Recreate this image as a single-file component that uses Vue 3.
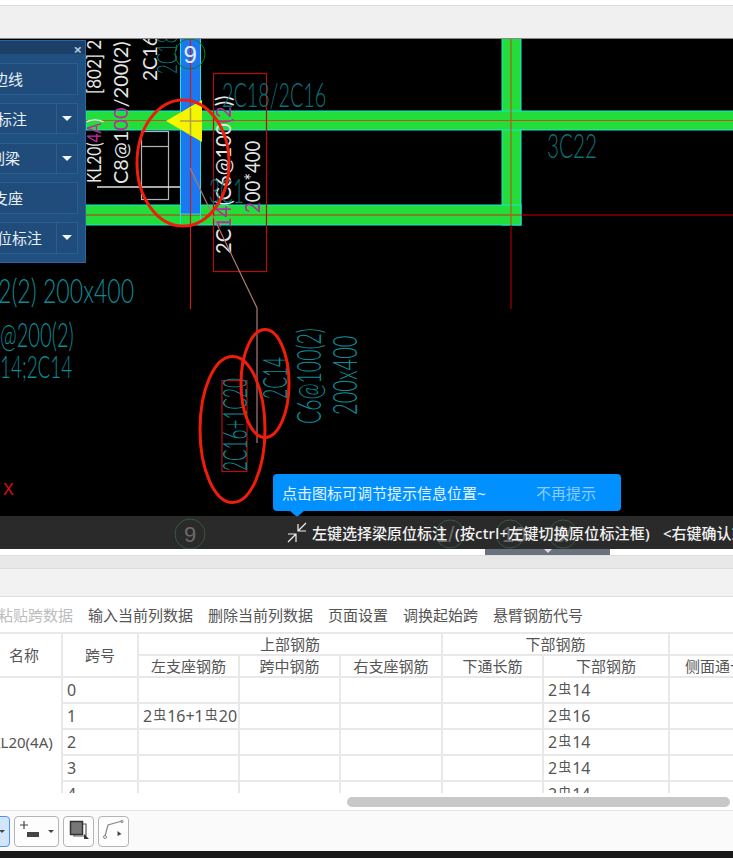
<template>
  <div class="page">
    <div class="top-strip"></div>

    <section class="canvas">
      <svg class="cad" width="733" height="510" viewBox="0 39 733 510" xmlns="http://www.w3.org/2000/svg">
        <!-- beams -->
        <rect x="502" y="30" width="19" height="195" fill="#22dd3a" stroke="#19e6d8" stroke-width="1" />
        <rect x="80" y="205" width="441" height="20" fill="#22dd3a" stroke="#19e6d8" stroke-width="1" />
        <rect x="86" y="111" width="660" height="19" fill="#22dd3a" stroke="#19e6d8" stroke-width="1" />
        <line x1="86" y1="120.500" x2="733" y2="120.500" stroke="#b85a1c" stroke-width="1.200" />
        <line x1="86" y1="215" x2="521" y2="215" stroke="#c8301a" stroke-width="1.200" />
        <line x1="521" y1="215" x2="733" y2="215" stroke="#c80000" stroke-width="1" />
        <line x1="511" y1="39" x2="511" y2="225" stroke="#b85a1c" stroke-width="1.200" />
        <line x1="511" y1="225" x2="511" y2="309" stroke="#a00000" stroke-width="1.200" />

        <!-- column -->
        <rect x="180.500" y="30" width="20" height="184" fill="#1c78f2" stroke="#19e6d8" stroke-width="1" />
        <line x1="180.500" y1="214" x2="180.500" y2="225" stroke="#19e6d8" />
        <line x1="200.500" y1="214" x2="200.500" y2="225" stroke="#19e6d8" />
        <line x1="190.500" y1="39" x2="190.500" y2="309" stroke="#c02020" stroke-width="1.200" />
        <polygon points="166,121 202,100 202,142" fill="#f5f500" />
        <line x1="180" y1="121" x2="202" y2="121" stroke="#b0a040" stroke-width="1.500" />
        <line x1="190.500" y1="108" x2="190.500" y2="136" stroke="#b0a040" stroke-width="1.500" />

        <!-- wall detail -->
        <g fill="none" stroke="#b4b4b4" stroke-width="1.200">
          <rect x="141.500" y="131.500" width="27" height="68" />
          <line x1="141" y1="146.500" x2="168" y2="146.500" />
        </g>
        <line x1="97" y1="187" x2="180" y2="187" stroke="#e0e0e0" stroke-width="1.500" />

        <!-- red boxes -->
        <rect x="213.500" y="73.500" width="53" height="198" fill="none" stroke="#b80d0d" stroke-width="1.200" />
        <rect x="222" y="380.500" width="25" height="91" fill="none" stroke="#b80d0d" stroke-width="1.200" />

        <!-- axis 9 -->
        <circle cx="190" cy="54" r="15" fill="none" stroke="#0b7a24" stroke-width="1" />
        <text x="183.500" y="63" class="axis-num">9</text>

        <!-- annotations -->
        <text
          v-for="(t, i) in notes"
          :key="i"
          class="note"
          :class="{ 'note-white': t.size < 22 }"
          :font-size="t.size"
          :transform="noteTransform(t)"
        ><tspan v-for="(p, j) in t.parts" :key="j" :fill="p[1]">{{ p[0] }}</tspan></text>

        <text x="3" y="495" class="mark-x">X</text>

        <!-- leader -->
        <polyline points="190,168 257,308 257,443" fill="none" stroke="#b07878" stroke-width="1.200" />

        <!-- hand drawn rings -->
        <g fill="none" stroke="#f01c0c" stroke-width="3">
          <ellipse cx="183" cy="163" rx="46" ry="63" />
          <ellipse cx="232.500" cy="429.500" rx="32.500" ry="73" />
          <ellipse cx="265" cy="383.500" rx="24" ry="54" />
        </g>

        <!-- axis bubbles under the status bar -->
        <g fill="none" stroke="#20a038" stroke-width="1">
          <circle cx="190" cy="534" r="15" />
          <circle cx="450" cy="534" r="14" />
          <circle cx="510" cy="534" r="14" />
          <circle cx="563" cy="534" r="14" />
        </g>
        <g class="bubble-num">
          <text x="184" y="542">9</text>
          <text x="436" y="542">1/</text>
          <text x="502" y="542">10</text>
          <text x="553" y="542">3/</text>
        </g>
      </svg>

      <div class="panel">
        <div class="panel-head"><span class="panel-close">×</span></div>
        <div class="panel-body">
          <div v-for="b in panelButtons" :key="b.id" class="panel-row">
            <div class="panel-btn" :style="{ paddingRight: b.pad + 'px' }">{{ b.text }}</div>
            <div v-if="b.drop" class="panel-drop"><i></i></div>
          </div>
        </div>
      </div>

      <div class="tip">
        <span class="tip-text">点击图标可调节提示信息位置~</span>
        <span class="tip-link">不再提示</span>
      </div>

      <div class="status">
        <svg class="status-icon" width="20" height="21" viewBox="0 0 20 21" fill="none" stroke="#f0f0f0" stroke-width="1.200">
          <path d="M19 1 11 9M11 2V9H19" />
          <path d="M1 20 9 12M1 12H9V20" />
        </svg>
        <span class="st-a">左键选择梁原位标注</span>
        <span class="st-b">(按ctrl+左键切换原位标注框)</span>
        <span class="st-c">&lt;右键确认或ESC取消&gt;</span>
      </div>
    </section>

    <div class="splitter"><div class="splitter-tab"><i></i></div></div>
    <div class="dock-head"></div>
    <div class="dock-title"></div>

    <div class="tools">
      <span class="tool-off">粘贴跨数据</span>
      <span v-for="t in tools" :key="t">{{ t }}</span>
    </div>

    <div class="grid-wrap">
      <table class="grid">
        <colgroup>
          <col class="c-name" />
          <col class="c-span" />
          <col class="c-101" />
          <col class="c-101" />
          <col class="c-102" />
          <col class="c-101" />
          <col class="c-126" />
          <col class="c-107" />
          <col class="c-107" />
        </colgroup>
        <thead>
          <tr class="h1">
            <th rowspan="2">名称</th>
            <th rowspan="2">跨号</th>
            <th colspan="3">上部钢筋</th>
            <th colspan="2">下部钢筋</th>
            <th colspan="2">侧面钢筋</th>
          </tr>
          <tr class="h2">
            <th>左支座钢筋</th>
            <th>跨中钢筋</th>
            <th>右支座钢筋</th>
            <th>下通长筋</th>
            <th>下部钢筋</th>
            <th>侧面通长筋</th>
            <th>侧面原位</th>
          </tr>
        </thead>
        <tbody>
          <tr v-for="(r, i) in rows" :key="i">
            <td v-if="i === 0" rowspan="5" class="name">KL20(4A)</td>
            <td class="left">{{ i }}</td>
            <td class="left">
              <template v-if="r.top">2<span class="bar">虫</span>16+1<span class="bar">虫</span>20</template>
            </td>
            <td></td>
            <td></td>
            <td></td>
            <td class="left">2<span class="bar">虫</span>{{ r.low }}</td>
            <td></td>
            <td></td>
          </tr>
        </tbody>
      </table>
    </div>

    <div class="scroll"><div class="thumb"></div></div>

    <div class="foot">
      <div class="foot-btn first"><i class="caret"></i></div>
      <div class="foot-btn wide">
        <svg width="26" height="22" viewBox="0 0 26 22" fill="none">
          <path d="M2 5H10M6 1V9" stroke="#444" stroke-width="1.200" />
          <rect x="9" y="12" width="12" height="5" fill="#444" />
        </svg>
        <i class="caret"></i>
      </div>
      <div class="foot-btn">
        <svg width="22" height="22" viewBox="0 0 22 22" fill="none">
          <rect x="2.500" y="1.500" width="12" height="13" fill="#777" stroke="#333" stroke-width="1.500" />
          <path d="M15 4H18V16H6V15" stroke="#555" stroke-width="1.200" />
          <path d="M16 14 21 19H16Z" fill="#333" />
        </svg>
      </div>
      <div class="foot-btn">
        <svg width="24" height="22" viewBox="0 0 24 22" fill="none">
          <path d="M3 16 6 5 20 1" stroke="#888" stroke-width="1.200" />
          <circle cx="3" cy="17" r="1.500" stroke="#888" />
          <circle cx="20" cy="1.500" r="1.200" stroke="#888" />
          <path d="M15.500 11 19.500 14 15.500 16Z" fill="#444" />
        </svg>
      </div>
    </div>
    <div class="foot-edge"></div>
  </div>
</template>

<script setup>
const red = '#b0309c'
const white = '#e6e6e6'
const teal = '#0f8a94'
const tealDark = '#0c727a'

const part = (text, color) => [text, color]

// size and sx set the height and the advance of the narrow cad lettering
const notes = [
  { x: 101, y: 183, rot: true, size: 20, sx: 0.78, parts: [part('KL20(', white), part('4A', red), part(')', white)] },
  { x: 101, y: 94, rot: true, size: 20, sx: 0.85, parts: [part('[802] 2', white)] },
  { x: 128, y: 184, rot: true, size: 20, sx: 1, parts: [part('C8@1', white), part('00', red), part('/200(2)', white)] },
  { x: 157, y: 81, rot: true, size: 20, sx: 0.95, parts: [part('2C16', white)] },
  { x: 177, y: 74, rot: true, size: 28, sx: 0.6, parts: [part('2C18', tealDark)] },
  { x: 231, y: 254, rot: true, size: 21, sx: 0.96, parts: [part('2C', white), part('14', red), part('(C6@100', white), part('(2', red), part('))', white)] },
  { x: 260, y: 213, rot: true, size: 21, sx: 0.88, parts: [part('2', red), part('00*400', white)] },
  { x: 222, y: 107, size: 33, sx: 0.6, parts: [part('2C18/2C16', tealDark)] },
  { x: 547, y: 158, size: 34, sx: 0.61, parts: [part('3C22', tealDark)] },
  { x: 209, y: 203, size: 34, sx: 0.56, parts: [part('3C1', tealDark)] },
  { x: -2, y: 303, size: 33, sx: 0.7, parts: [part('2(2) 200x400', teal)] },
  { x: 0, y: 347, size: 33, sx: 0.61, parts: [part('@200(2)', teal)] },
  { x: 0, y: 378, size: 32, sx: 0.59, parts: [part('14;2C14', teal)] },
  { x: 287, y: 399, rot: true, size: 33, sx: 0.53, parts: [part('2C14', teal)] },
  { x: 247, y: 471, rot: true, size: 33, sx: 0.52, parts: [part('2C16+1C20', teal)] },
  { x: 321, y: 424, rot: true, size: 33, sx: 0.59, parts: [part('C6@100(2)', teal)] },
  { x: 357, y: 415, rot: true, size: 33, sx: 0.61, parts: [part('200x400', teal)] },
]

function noteTransform(t) {
  const turn = t.rot ? ' rotate(-90)' : ''
  return `translate(${t.x} ${t.y})${turn} scale(${t.sx} 1)`
}

const panelButtons = [
  { id: 1, text: '边线', pad: 54, drop: false },
  { id: 2, text: '原位标注', pad: 29, drop: true },
  { id: 3, text: '刷梁', pad: 36, drop: true },
  { id: 4, text: '支座', pad: 54, drop: false },
  { id: 5, text: '原位标注', pad: 14, drop: true },
]

const tools = ['输入当前列数据', '删除当前列数据', '页面设置', '调换起始跨', '悬臂钢筋代号']

const rows = [
  { top: false, low: 14 },
  { top: true, low: 16 },
  { top: false, low: 14 },
  { top: false, low: 14 },
  { top: false, low: 14 },
]
</script>

<style>
html,
body {
  margin: 0;
  overflow: hidden;
  background: #fff;
}
</style>

<style scoped>
.page {
  width: 733px;
  height: 858px;
  overflow: hidden;
  display: flex;
  flex-direction: column;
  font-family: "Noto Sans", "Noto Sans CJK SC", sans-serif;
  font-size: 15px;
  color: #555;
}

.top-strip {
  height: 32px;
  flex-shrink: 0;
  margin-top: 5px;
  background: #f0f0f0;
  border-top: 1px solid #ddd;
  border-bottom: 1px solid #888;
}

.canvas {
  position: relative;
  height: 510px;
  flex-shrink: 0;
  overflow: hidden;
  background: #000;
}

.cad {
  display: block;
}

.note {
  font-family: Lato, "Liberation Sans", sans-serif;
  font-weight: 300;
}

.note-white {
  font-weight: 400;
}

.axis-num {
  font-family: "Liberation Sans", sans-serif;
  font-size: 24px;
  fill: #e4eaff;
}

.bubble-num text {
  font-family: "Liberation Sans", sans-serif;
  font-size: 22px;
  fill: #d8d8d8;
}

.mark-x {
  font-family: "Liberation Sans", sans-serif;
  font-size: 16px;
  fill: #e01010;
}

.panel {
  position: absolute;
  left: -70px;
  top: 1px;
  width: 156px;
  height: 223px;
  background: #20507f;
  border: 1px solid #2c659f;
  box-sizing: border-box;
}

.panel-head {
  height: 13px;
  background: #1b3f66;
  position: relative;
}

.panel-close {
  position: absolute;
  right: 3px;
  top: -2px;
  color: #a9c4dc;
  font-size: 15px;
  font-weight: 700;
  line-height: 20px;
}

.panel-body {
  display: flex;
  flex-direction: column;
  gap: 8.25px;
  padding: 9px 7px 0 0;
}

.panel-row {
  display: flex;
  height: 31.5px;
}

.panel-btn {
  flex: 1;
  display: flex;
  align-items: center;
  justify-content: flex-end;
  box-sizing: border-box;
  background: #1f4c7b;
  border: 1px solid #2a5d90;
  color: #eaf0f6;
  line-height: 20px;
  white-space: nowrap;
}

.panel-drop {
  width: 21px;
  display: flex;
  align-items: center;
  justify-content: center;
  background: #1f4c7b;
  border: 1px solid #2a5d90;
  border-left: none;
  box-sizing: border-box;
}

.panel-drop i {
  width: 0;
  height: 0;
  border-left: 5px solid transparent;
  border-right: 5px solid transparent;
  border-top: 5px solid #f2f5f8;
}

.tip {
  position: absolute;
  left: 273px;
  top: 435px;
  width: 348px;
  height: 37px;
  display: flex;
  align-items: center;
  padding-left: 9px;
  box-sizing: border-box;
  background: #0090ff;
  border-radius: 4px;
  line-height: 20px;
}

.tip::after {
  content: "";
  position: absolute;
  left: 17px;
  bottom: -6px;
  border-left: 7px solid transparent;
  border-right: 7px solid transparent;
  border-top: 6px solid #0090ff;
}

.tip-text {
  width: 254px;
  color: #e6f4ff;
}

.tip-link {
  color: #8ccbff;
}

.status {
  position: absolute;
  left: 0;
  right: 0;
  bottom: 0;
  height: 33px;
  display: flex;
  align-items: center;
  padding-left: 287px;
  background: rgba(60, 60, 60, 0.7);
  color: #f2f2f2;
  font-weight: 500;
  line-height: 20px;
  white-space: nowrap;
}

.status-icon {
  flex-shrink: 0;
  margin-right: 5px;
}

.st-b {
  margin-left: 8px;
  letter-spacing: 0.2px;
}

.st-c {
  margin-left: 13px;
}

.splitter {
  height: 6px;
  flex-shrink: 0;
  background: #fff;
  border-bottom: 1px solid #ddd;
  position: relative;
}

.splitter-tab {
  position: absolute;
  left: 485px;
  top: 0;
  width: 125px;
  height: 6px;
  background: #69727e;
  display: flex;
  justify-content: center;
}

.splitter-tab i {
  width: 0;
  height: 0;
  border-left: 4px solid transparent;
  border-right: 4px solid transparent;
  border-top: 4px solid #d8dce0;
}

.dock-head {
  height: 12px;
  flex-shrink: 0;
  background: #e8e8e8;
  border-bottom: 1px solid #ddd;
}

.dock-title {
  height: 27px;
  flex-shrink: 0;
  background: #f2f2f2;
  border-bottom: 1px solid #ddd;
}

.tools {
  height: 35px;
  flex-shrink: 0;
  display: flex;
  align-items: center;
  gap: 15px;
  margin-left: -2px;
  line-height: 20px;
  white-space: nowrap;
}

.tool-off {
  color: #bcbcbc;
}

.grid-wrap {
  height: 161px;
  flex-shrink: 0;
  overflow: hidden;
}

.grid {
  table-layout: fixed;
  width: 897px;
  margin-left: -15px;
  border-collapse: collapse;
  line-height: 20px;
}

.c-name,
.c-span {
  width: 76px;
}

.c-101 {
  width: 101px;
}

.c-102 {
  width: 102px;
}

.c-126 {
  width: 126px;
}

.c-107 {
  width: 107px;
}

.grid th,
.grid td {
  border: 2px solid #e8e8e8;
  padding: 0;
  font-weight: 400;
  text-align: center;
  white-space: nowrap;
  overflow: hidden;
}

.grid td {
  font-size: 16px;
}

.grid td.name {
  font-size: 15px;
  padding-right: 4px;
}

.h1 {
  height: 20px;
}

.h2 {
  height: 21px;
}

.grid tbody tr {
  height: 26px;
}

.grid td.left {
  text-align: left;
  padding-left: 4px;
}

.bar {
  display: inline-block;
  width: 15px;
  font-size: 13px;
  text-align: center;
  position: relative;
  top: -3px;
}

.scroll {
  height: 18px;
  flex-shrink: 0;
  padding-top: 4px;
  box-sizing: border-box;
  border-bottom: 1px solid #e4e4e4;
}

.thumb {
  width: 383px;
  height: 10px;
  margin-left: 347px;
  border-radius: 5px;
  background: #c8c8c8;
}

.foot {
  height: 40px;
  flex-shrink: 0;
  display: flex;
  align-items: center;
  gap: 4px;
  margin-left: -20px;
  background: #fafafa;
}

.foot-btn {
  width: 31px;
  height: 31px;
  display: flex;
  align-items: center;
  justify-content: center;
  box-sizing: border-box;
  background: #fdfdfd;
  border: 1px solid #b4b4b4;
  border-radius: 4px;
}

.foot-btn.first {
  width: 30px;
  justify-content: flex-end;
  padding-right: 4px;
  background: #d3e5fb;
  border-color: #4b94ec;
}

.foot-btn.wide {
  width: 45px;
  justify-content: flex-start;
  gap: 4px;
  padding-left: 3px;
}

.caret {
  width: 0;
  height: 0;
  border-left: 3px solid transparent;
  border-right: 3px solid transparent;
  border-top: 3px solid #444;
}

.foot-edge {
  flex: 1;
  background: #1a1a1a;
}
</style>
